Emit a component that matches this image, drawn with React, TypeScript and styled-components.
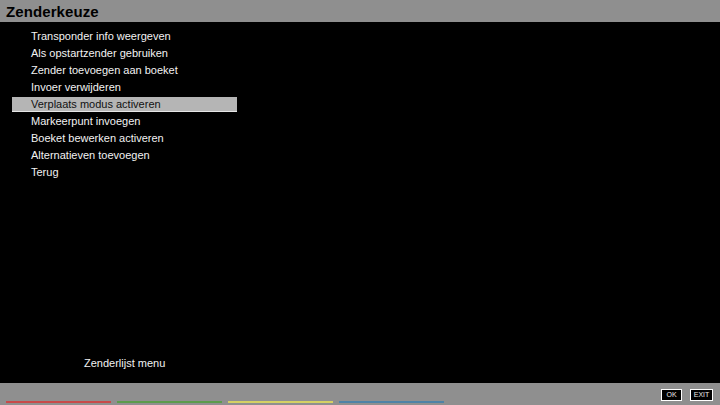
import React from "react";
import styled, { createGlobalStyle } from "styled-components";

const GlobalStyle = createGlobalStyle`
  html, body {
    margin: 0;
    padding: 0;
    background: #000;
  }
`;

const items = [
  "Transponder info weergeven",
  "Als opstartzender gebruiken",
  "Zender toevoegen aan boeket",
  "Invoer verwijderen",
  "Verplaats modus activeren",
  "Markeerpunt invoegen",
  "Boeket bewerken activeren",
  "Alternatieven toevoegen",
  "Terug",
];

const selectedIndex = 4;

const colorKeys = ["#c84a4a", "#5c9c4c", "#d6d064", "#4f82a6"];

const App: React.FC = () => {
  return (
    <Screen>
      <GlobalStyle />
      <Header>
        <Title>Zenderkeuze</Title>
      </Header>
      <Main>
        <MenuList>
          {items.map((label, i) => (
            <MenuItem key={label} $selected={i === selectedIndex}>
              {label}
            </MenuItem>
          ))}
        </MenuList>
        <Caption>Zenderlijst menu</Caption>
      </Main>
      <Footer>
        <ColorKeys>
          {colorKeys.map((c) => (
            <ColorKey key={c} $color={c} />
          ))}
        </ColorKeys>
        <Buttons>
          <KeyButton $width={21}>OK</KeyButton>
          <KeyButton $width={23}>EXIT</KeyButton>
        </Buttons>
      </Footer>
    </Screen>
  );
};

const Screen = styled.div`
  width: 720px;
  height: 405px;
  display: flex;
  flex-direction: column;
  background: #000;
  font-family: "Liberation Sans", Arial, sans-serif;
  overflow: hidden;
`;

const Header = styled.div`
  height: 22px;
  background: #8f8f8f;
  display: flex;
  align-items: center;
  padding-left: 6px;
  flex-shrink: 0;
`;

const Title = styled.h1`
  margin: 0;
  font-size: 15px;
  font-weight: 700;
  color: #000;
  line-height: 1;
  letter-spacing: 0.1px;
`;

const Main = styled.div`
  flex: 1;
  display: flex;
  flex-direction: column;
  justify-content: space-between;
  padding: 7px 0 12px 0;
`;

const MenuList = styled.ul`
  list-style: none;
  margin: 0;
  padding: 0 0 0 12px;
  display: flex;
  flex-direction: column;
  gap: 2px;
  width: 225px;
`;

const MenuItem = styled.li<{ $selected: boolean }>`
  height: 15px;
  padding-left: 19px;
  font-size: 11px;
  line-height: 14px;
  white-space: nowrap;
  color: ${(p) => (p.$selected ? "#111" : "#f2f2f2")};
  background: ${(p) => (p.$selected ? "#b5b5b5" : "transparent")};
  box-shadow: ${(p) => (p.$selected ? "inset 0 -1px 0 #e6e6e6" : "none")};
`;

const Caption = styled.div`
  padding-left: 84px;
  font-size: 11px;
  line-height: 15px;
  color: #f2f2f2;
`;

const Footer = styled.div`
  height: 22px;
  background: #8f8f8f;
  display: flex;
  justify-content: space-between;
  padding: 0 7px 0 6px;
  flex-shrink: 0;
`;

const ColorKeys = styled.div`
  align-self: flex-end;
  display: flex;
  gap: 6px;
  margin-bottom: 2px;
`;

const ColorKey = styled.div<{ $color: string }>`
  width: 105px;
  height: 2px;
  background: ${(p) => p.$color};
`;

const Buttons = styled.div`
  display: flex;
  gap: 8px;
  padding-top: 6px;
`;

const KeyButton = styled.div<{ $width: number }>`
  width: ${(p) => p.$width}px;
  height: 12px;
  box-sizing: border-box;
  border: 1px solid #fff;
  background: #000;
  color: #e8e8e8;
  font-size: 7px;
  line-height: 10px;
  text-align: center;
`;

export default App;
